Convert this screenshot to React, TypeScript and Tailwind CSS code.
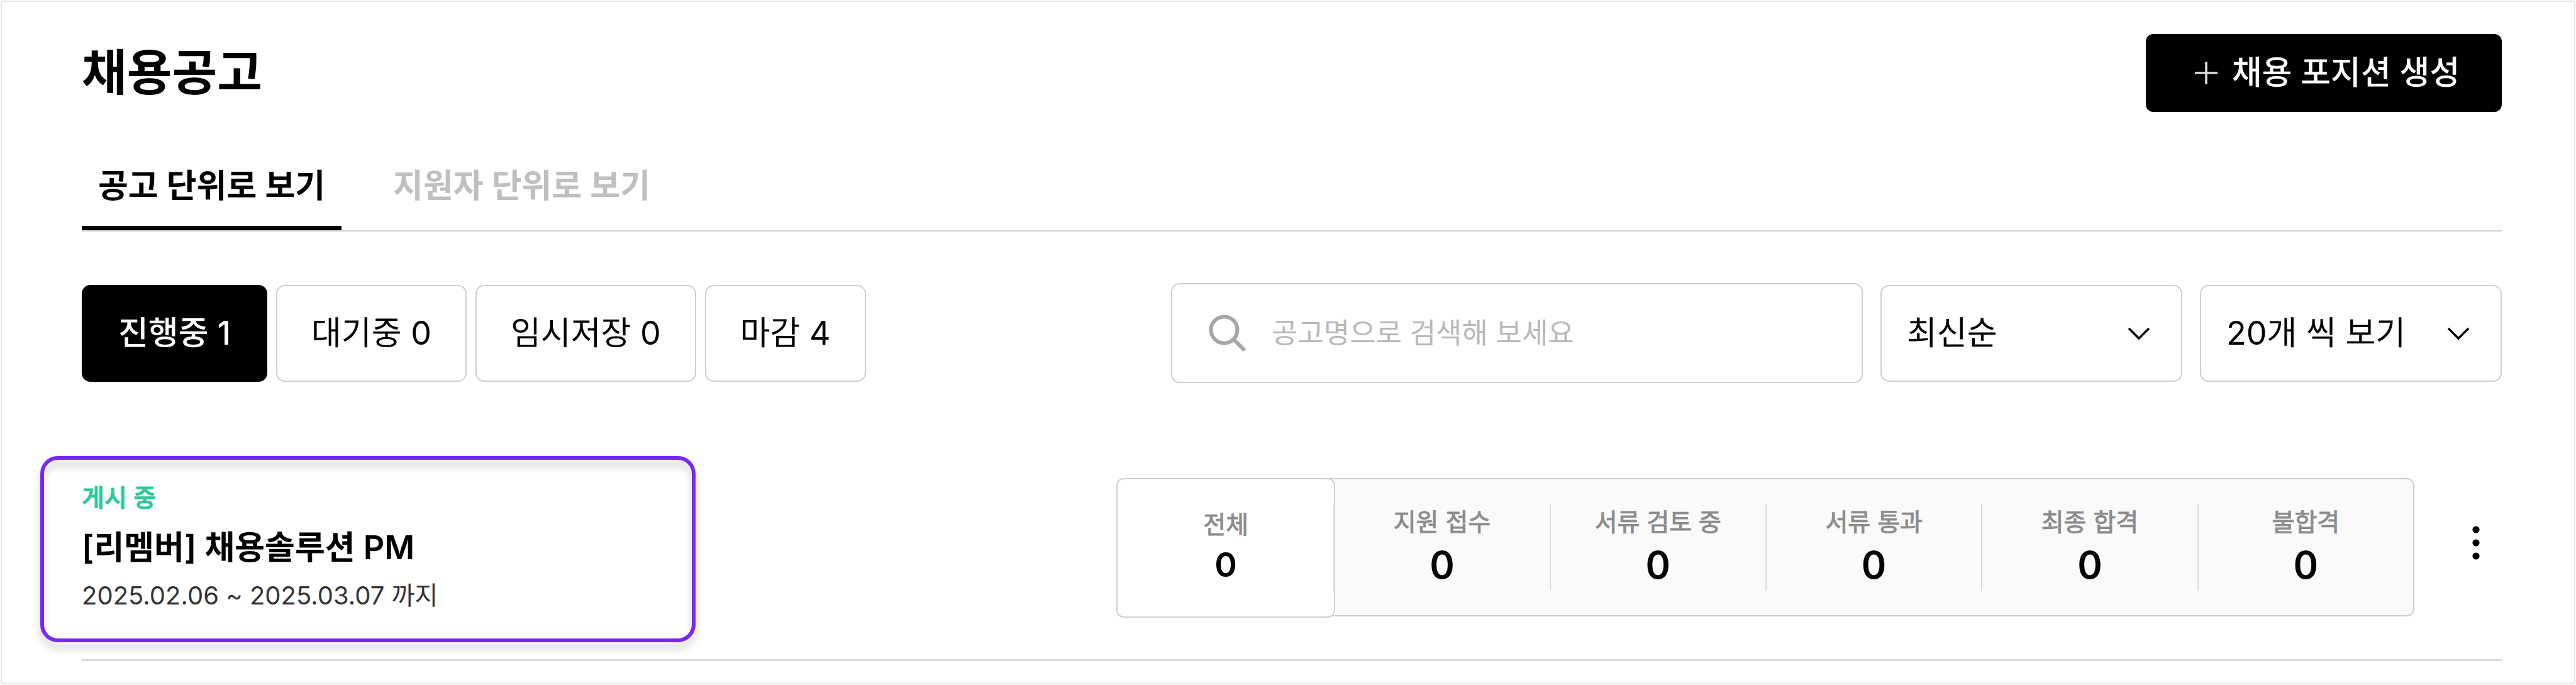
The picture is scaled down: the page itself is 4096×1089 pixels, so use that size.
import React, { useState } from 'react';
import clsx from 'clsx';

const TABS = ['공고 단위로 보기', '지원자 단위로 보기'];

const FILTERS = [
  { label: '진행중', count: 1 },
  { label: '대기중', count: 0 },
  { label: '임시저장', count: 0 },
  { label: '마감', count: 4 },
];

const STAGES = [
  { label: '전체', count: 0 },
  { label: '지원 접수', count: 0 },
  { label: '서류 검토 중', count: 0 },
  { label: '서류 통과', count: 0 },
  { label: '최종 합격', count: 0 },
  { label: '불합격', count: 0 },
];

function SelectBox({ label, options }: { label: string; options: string[] }) {
  return (
    <div className="relative w-[480px] shrink-0">
      <select aria-label={label} className="block w-full h-[154px] appearance-none rounded-[14px] border-2 border-[#cfcfcf] bg-white pl-[40px] pr-[100px] text-[52px] text-black">
        {options.map((o) => (
          <option key={o}>{o}</option>
        ))}
      </select>
      <svg className="absolute right-[50px] top-1/2 -translate-y-1/2 w-[38px] h-[24px] pointer-events-none" viewBox="0 0 38 24" fill="none" stroke="#000" strokeWidth="3.5">
        <path d="M3 4 L19 20 L35 4" />
      </svg>
    </div>
  );
}

function StageCell({ label, count, active }: { label: string; count: number; active: boolean }) {
  if (active) {
    // the selected stage sits on top of the grey bar and covers its border
    return (
      <button type="button" className="-mt-[2px] -ml-[2px] -mb-[4px] -mr-[3px] pb-[2px] flex flex-col items-center justify-center rounded-[12px] border-2 border-[#cfcfcf] bg-white">
        <span className="text-[39px] leading-[56px] text-[#8c8c8c] [-webkit-text-stroke:1px]">{label}</span>
        <span className="text-[54px] leading-[72px] font-semibold">{count}</span>
      </button>
    );
  }
  return (
    <button type="button" className="relative flex items-center">
      <span className="flex h-[138px] w-full flex-col items-center justify-center gap-[4px] pb-[4px] border-l-2 border-[#dcdcdc]">
        <span className="text-[39px] leading-[56px] text-[#8c8c8c] [-webkit-text-stroke:1px]">{label}</span>
        <span className="text-[60px] leading-[72px] font-semibold">{count}</span>
      </span>
    </button>
  );
}

export default function App() {
  const [tab, setTab] = useState(0);
  const [filter, setFilter] = useState(0);
  const [keyword, setKeyword] = useState('');

  return (
    <div className="min-h-screen flex bg-white p-px text-black font-['Inter','Noto_Sans_CJK_KR',sans-serif]">
      <main className="flex-1 border-2 border-[#e6e6e6] pt-[51px] pl-[127px] pr-[115px]">
        <header className="flex items-center justify-between h-[124px]">
          <h1 className="text-[78px] leading-[112px] font-semibold">채용공고</h1>
          <button type="button" className="flex items-center justify-center gap-[22px] w-[566px] h-[124px] pl-[10px] rounded-[12px] bg-black text-white text-[52px] font-medium">
            <svg className="w-[38px] h-[38px]" viewBox="0 0 38 38" stroke="#e0e0e0" strokeWidth="3.5">
              <path d="M19 1 V37 M1 19 H37" />
            </svg>
            채용 포지션 생성
          </button>
        </header>

        <nav className="mt-[82px] flex gap-[56px] border-b-2 border-[#cfcfcf]">
          {TABS.map((t, i) => (
            <button
              key={t}
              type="button"
              onClick={() => setTab(i)}
              className={clsx(
                'px-[26px] pb-[27px] border-b-[7px] text-[52px] leading-[72px] font-semibold',
                i === tab ? 'border-black text-black' : 'border-transparent text-[#bfbfbf]'
              )}
            >
              {t}
            </button>
          ))}
        </nav>

        <div className="mt-[82px] flex items-center justify-between">
          <div className="flex gap-[14px]">
            {FILTERS.map((f, i) => (
              <button
                key={f.label}
                type="button"
                onClick={() => setFilter(i)}
                className={clsx(
                  'h-[154px] rounded-[14px] border-2 text-[52px]',
                  i === filter ? 'px-[56px] border-black bg-black text-white font-medium' : 'px-[54px] border-[#cfcfcf] bg-white'
                )}
              >
                {f.label} {f.count}
              </button>
            ))}
          </div>

          <div className="flex items-center gap-[28px]">
            <label className="flex items-center gap-[40px] w-[1100px] h-[159px] rounded-[14px] border-2 border-[#cfcfcf] pl-[58px] pr-[40px]">
              <svg className="w-[60px] h-[60px] shrink-0" viewBox="0 0 60 60" fill="none" stroke="#a6a6a6" strokeWidth="6">
                <circle cx="24.500" cy="24.500" r="21" />
                <path d="M39.500 39.500 L57 57" />
              </svg>
              <input
                type="text"
                aria-label="공고 검색"
                value={keyword}
                onChange={(e) => setKeyword(e.target.value)}
                placeholder="공고명으로 검색해 보세요"
                className="flex-1 min-w-0 text-[45px] leading-[72px] outline-none placeholder:text-[#b8b8b8]"
              />
            </label>
            <SelectBox label="정렬" options={['최신순', '마감순']} />
            <SelectBox label="보기 개수" options={['20개 씩 보기', '50개 씩 보기']} />
          </div>
        </div>

        <ul className="mt-[116px]">
          <li className="flex items-start justify-between pb-[27px] border-b-[3px] border-[#d9d9d9]">
            <div className="relative w-[1042px] -ml-[66px] pl-[66px] pt-[38px] pb-[46px]">
              <p className="text-[39px] leading-[56px] font-medium text-[#2bc99b] [-webkit-text-stroke:1px]">게시 중</p>
              <h2 className="mt-[16px] text-[52px] leading-[72px] font-semibold">
                <a href="#job">[리멤버] 채용솔루션 PM</a>
              </h2>
              <p className="mt-[12px] text-[40px] leading-[56px] text-[#333333]">2025.02.06 ~ 2025.03.07 까지</p>
              <span className="absolute inset-0 pointer-events-none rounded-[28px] border-[6px] border-[#7828f5] drop-shadow-[0_10px_6px_rgba(0,0,0,0.2)]" />
            </div>

            <div className="flex items-center gap-[56px] mt-[35px]">
              <div className="grid grid-cols-6 w-[2064px] h-[220px] rounded-[12px] border-2 border-[#cfcfcf] bg-[#fafafa]">
                {STAGES.map((s, i) => (
                  <StageCell key={s.label} label={s.label} count={s.count} active={i === 0} />
                ))}
              </div>
              <button type="button" aria-label="더보기" className="flex justify-center w-[83px] pb-[14px]">
                <svg className="w-[12px] h-[54px]" viewBox="0 0 12 54" fill="#000">
                  <circle cx="6" cy="6" r="5.600" />
                  <circle cx="6" cy="27" r="5.600" />
                  <circle cx="6" cy="48" r="5.600" />
                </svg>
              </button>
            </div>
          </li>
        </ul>
      </main>
    </div>
  );
}
